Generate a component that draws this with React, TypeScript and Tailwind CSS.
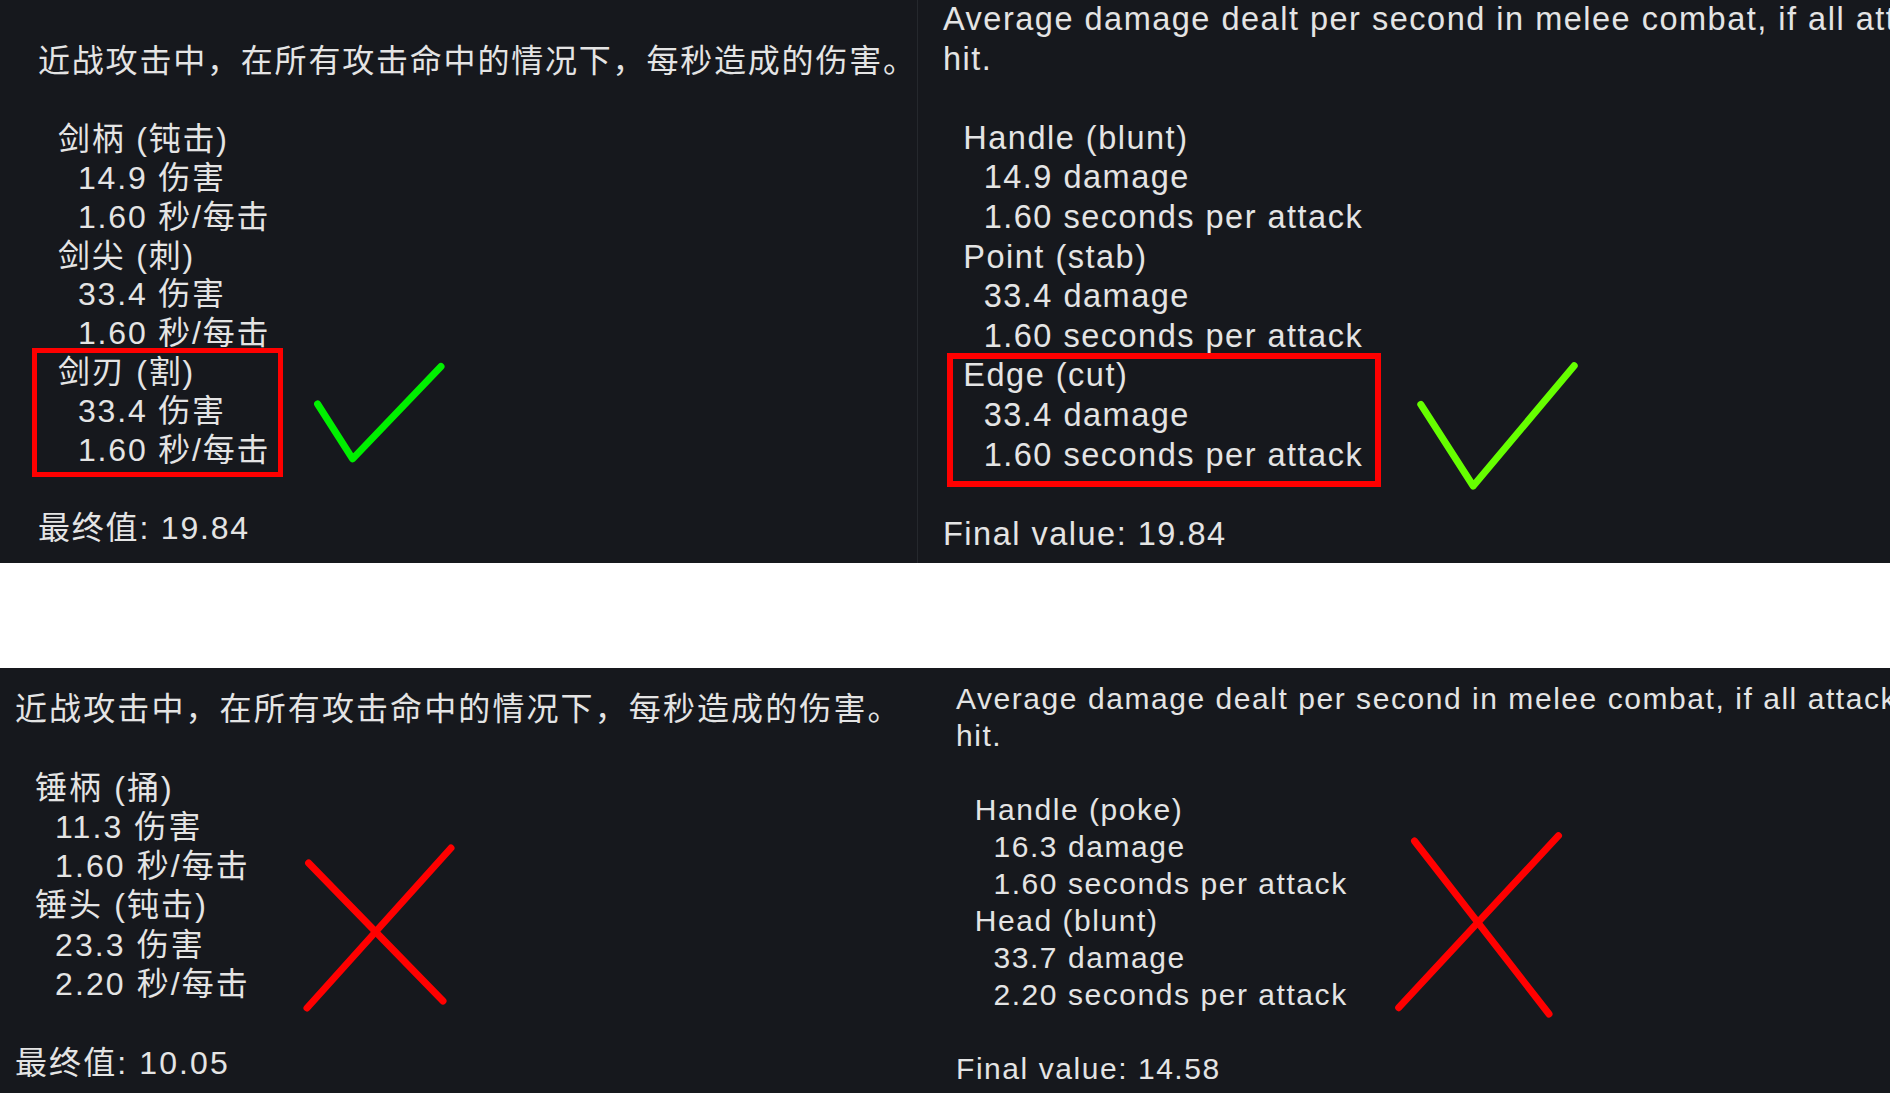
import type { ReactNode } from 'react'

interface Hit {
  part: string
  damage: string
  speed: string
}

interface StatPanelProps {
  desc: string[]
  hits: Hit[]
  final: string
  highlight?: number
  boxClassName?: string
  mark?: ReactNode
  className: string
}

// one tooltip body: description, per-part breakdown, final value
function StatPanel({ desc, hits, final, highlight, boxClassName, mark, className }: StatPanelProps) {
  return (
    <div className={`relative overflow-hidden whitespace-nowrap ${className}`}>
      {desc.map((line) => (
        <p key={line}>{line}</p>
      ))}
      <div className="mt-[1lh]">
        {hits.map((hit, i) => (
          <div key={hit.part} className="relative">
            {i === highlight && <span className={`absolute border-[#ff0000] ${boxClassName ?? ''}`} />}
            <p className="pl-[0.625em]">{hit.part}</p>
            <p className="pl-[1.25em]">{hit.damage}</p>
            <p className="pl-[1.25em]">{hit.speed}</p>
          </div>
        ))}
      </div>
      <p className="mt-[1lh]">{final}</p>
      {mark}
    </div>
  )
}

const zhDesc = ['近战攻击中，在所有攻击命中的情况下，每秒造成的伤害。']
const enDesc = ['Average damage dealt per second in melee combat, if all attacks', 'hit.']

const swordZh: Hit[] = [
  { part: '剑柄 (钝击)', damage: '14.9 伤害', speed: '1.60 秒/每击' },
  { part: '剑尖 (刺)', damage: '33.4 伤害', speed: '1.60 秒/每击' },
  { part: '剑刃 (割)', damage: '33.4 伤害', speed: '1.60 秒/每击' },
]

const swordEn: Hit[] = [
  { part: 'Handle (blunt)', damage: '14.9 damage', speed: '1.60 seconds per attack' },
  { part: 'Point (stab)', damage: '33.4 damage', speed: '1.60 seconds per attack' },
  { part: 'Edge (cut)', damage: '33.4 damage', speed: '1.60 seconds per attack' },
]

const hammerZh: Hit[] = [
  { part: '锤柄 (捅)', damage: '11.3 伤害', speed: '1.60 秒/每击' },
  { part: '锤头 (钝击)', damage: '23.3 伤害', speed: '2.20 秒/每击' },
]

const hammerEn: Hit[] = [
  { part: 'Handle (poke)', damage: '16.3 damage', speed: '1.60 seconds per attack' },
  { part: 'Head (blunt)', damage: '33.7 damage', speed: '2.20 seconds per attack' },
]

function Check({ className, points, color }: { className: string; points: string; color: string }) {
  return (
    <svg className={`absolute ${className}`} fill="none" stroke={color} strokeWidth={7} strokeLinecap="round" strokeLinejoin="round">
      <polyline points={points} />
    </svg>
  )
}

function Cross({ className, a, b }: { className: string; a: number[]; b: number[] }) {
  return (
    <svg className={`absolute ${className}`} fill="none" stroke="#ff0000" strokeWidth={7} strokeLinecap="round">
      <line x1={a[0]} y1={a[1]} x2={a[2]} y2={a[3]} />
      <line x1={b[0]} y1={b[1]} x2={b[2]} y2={b[3]} />
    </svg>
  )
}

export default function App() {
  return (
    <div className="w-[1890px] h-[1093px] overflow-hidden bg-white flex flex-col text-[#e4e4e4] font-['Liberation_Sans','Noto_Sans_CJK_SC',sans-serif]">
      <section className="h-[563px] flex bg-[#16181d]">
        <StatPanel
          className="w-[918px] shrink-0 border-r border-[#25282d] pl-[38px] pt-[42px] text-[32px] leading-[38.9px] tracking-[1.8px]"
          desc={zhDesc}
          hits={swordZh}
          final="最终值: 19.84"
          highlight={2}
          boxClassName="-left-[6px] -top-[5px] -bottom-[7px] w-[251px] border-[5px]"
          mark={<Check className="left-[310px] top-[358px] w-[140px] h-[110px]" points="7.6,46 42.6,100.8 131,8.5" color="#00f000" />}
        />
        <StatPanel
          className="flex-1 pl-[25px] pt-0 text-[32.5px] leading-[39.6px] tracking-[1.5px]"
          desc={enDesc}
          hits={swordEn}
          final="Final value: 19.84"
          highlight={2}
          boxClassName="left-[4px] -top-[3px] -bottom-[12px] w-[434px] border-[6px]"
          mark={<Check className="left-[495px] top-[358px] w-[170px] h-[136px]" points="7.8,46.4 60.2,128 161.2,7.8" color="#66ff00" />}
        />
      </section>

      <section className="mt-[105px] flex-1 flex bg-[#16181d]">
        <StatPanel
          className="w-[930px] shrink-0 pl-[15px] pt-[22px] text-[32px] leading-[39.3px] tracking-[2.1px]"
          desc={zhDesc}
          hits={hammerZh}
          final="最终值: 10.05"
          mark={<Cross className="left-[300px] top-[172px] w-[160px] h-[176px]" a={[8.6, 23, 143, 161]} b={[151, 8, 7, 168]} />}
        />
        <StatPanel
          className="flex-1 pl-[26px] pt-[11.5px] text-[30px] leading-[37px] tracking-[1.55px]"
          desc={enDesc}
          hits={hammerEn}
          final="Final value: 14.58"
          mark={<Cross className="left-[460px] top-[160px] w-[176px] h-[194px]" a={[24.5, 13, 159, 186]} b={[168.5, 7.7, 8.7, 179.7]} />}
        />
      </section>
    </div>
  )
}
